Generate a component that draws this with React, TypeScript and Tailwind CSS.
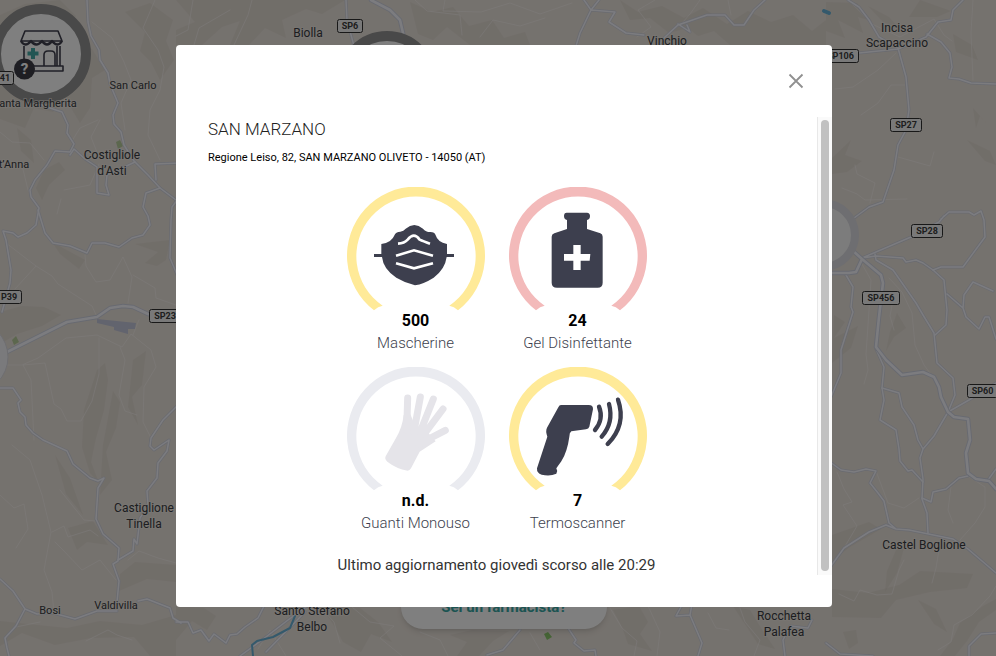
import * as React from "react"

const roads = [
  "M87 0L88 22L91 36L99 50L100 60L108 73L110 84L118 103L113 115L114 124L121 132L124 145L134 161L148 175L160 188L180 203",
  "M30 100L44 106L62 112L68 125L67 133L74 144L70 152L55 151L47 165L35 180L30 190L31 197L39 208L36 225L27 233L18 237L13 233L3 231L6 240L11 270L10 283L2 312",
  "M38 210L45 233L53 243L70 246L87 253L92 243L105 243L119 247L132 238L143 235L150 225L148 216L143 207L146 193L160 188",
  "M70 155L74 149L85 159L97 167L97 193L109 195L106 185L107 175L135 162",
  "M180 163L155 164L156 180M178 199L172 207L171 220L170 258L178 277",
  "M0 388L13 388L21 400L18 403L20 412L25 417L26 425L33 433L43 440L67 451L73 464L90 478L98 481L104 478L98 488L96 519L103 534L119 548L118 561L113 564L119 581L117 602",
  "M178 405L163 420L151 438L150 446L154 450L169 440L167 451L158 463L157 478L147 491L148 506L140 518L137 544L134 539L133 551L118 560",
  "M0 579L13 591L25 609L37 614L53 613L75 619L97 611L117 611M25 609L16 626L5 638L7 648L9 656M138 601L147 599L170 608L173 618L181 623",
  "M848 0L859 7L869 20L879 37L898 48L906 77L909 110L906 130L898 145L894 170L883 202L869 207L850 221",
  "M963 0L953 10L951 20L938 22L926 37L898 49L859 53M927 34L941 42L950 53L952 67L949 78L959 79L971 83L996 84",
  "M941 219L949 212L969 212L974 215L981 211L984 220L985 237L963 267L941 267L933 270L923 263L916 260L906 262L903 258L876 256L862 258L911 237L939 222L944 216",
  "M875 254L876 260L893 270L916 303L923 315L934 333L937 363L953 378L955 395L948 412",
  "M933 270L944 280L947 310L946 325L935 335M947 294L963 308L966 317L979 329L985 317L989 317L996 339M963 308L964 295L973 282L993 291",
  "M846 275L853 287L851 307L853 312L841 350L841 373L831 397",
  "M876 349L884 367L882 388L884 400L880 420L896 430L899 449L900 461L908 471L912 470L923 482",
  "M882 388L899 393L902 407L914 425L918 440L923 449M948 412L934 436L923 449L920 458L923 479L922 499L927 513L928 533M948 412L969 400L996 383",
  "M922 498L931 502L933 492L946 489L959 478L968 476M988 480L996 469",
  "M830 462L841 470L854 472L866 469L876 471L870 483L878 493L884 501L889 523L896 529M831 566L844 548L869 532L886 525L896 529L909 530L953 539L968 549L996 573",
  "M826 643L840 654L873 656M969 656L969 646L981 634L996 633",
  "M176 622L188 622L193 633L201 630L209 641L214 634L226 643L230 635L237 634L245 627L258 618L264 606",
  "M310 604L288 620L262 640L240 656M305 612L266 652M487 655L503 650L520 630M568 628L576 640L574 643L584 651L595 650L596 656",
  "M676 616L682 605L692 604L690 615L702 643L698 656M676 616L690 615M812 620L808 628L790 626L783 640L785 656",
  "M346 0L347 20L354 46M584 0L591 10L599 0M591 10L580 33L576 46M591 10L615 12L609 22L626 33L644 35",
  "M765 0L754 10L744 25L734 25L725 15L707 15L678 25L665 37L658 46M678 24L690 32L687 25",
]

const mainRoads = [
  "M0 356L7 352L67 322L97 317L110 308L123 306L133 307L148 314L180 322",
  "M371 0L390 10L400 20L403 33L404 46",
  "M830 273L849 273L856 272L862 259L881 275L883 283L879 317L876 347L886 360L902 375L923 372L934 377L939 387L941 397L948 412L954 417L968 419L970 440L966 453L968 473L976 479L989 481L996 489M862 259L852 250",
]

const lanes = [
  "M92 22L112 38L124 62L131 80L121 103L125 130M155 0L143 28L158 50L164 67L160 90L150 110L148 135L160 160",
  "M0 132L12 142L30 143L44 160M22 165L28 190L40 208M64 190L90 185L99 164M61 199L57 214M98 120L80 128L72 141M100 120L91 137L97 152",
  "M6 243L36 266L15 289M36 266L52 276L58 284L92 306L97 317M85 255L86 266L96 282L110 280L123 257L132 277L128 303",
  "M7 365L22 365L38 358L66 338L97 335L122 347L131 334L151 350L156 367L144 387L143 422L152 440M99 338L99 374L92 401L81 421L67 421L61 409L54 404L45 363L23 365L31 380L34 440",
  "M133 275L155 288L156 298L176 305M139 320L133 335M120 347L125 360L119 395L125 411L137 415",
  "M12 445L30 460L42 495L51 532L44 570L52 592L54 613M0 495L14 508L24 504L28 529L16 548M60 490L84 520L95 521M55 542L63 550L82 570L100 560L116 580",
  "M52 532L64 526L68 537L90 530L98 536M128 560L139 551L158 558L176 563M86 641L108 630L117 635L132 640M16 627L40 622",
  "M848 0L874 25L900 37L934 19L944 35L952 41M835 89L853 87L878 70L896 53M905 85L891 85L878 103L861 115",
  "M973 0L971 33L973 80M898 157L930 166L934 152M855 165L857 174L875 183L870 203M842 188L857 194L865 200L907 199",
  "M862 264L871 280L868 325L866 354L868 370L864 384M889 278L902 292L912 313L915 345L924 365L936 381M893 300L890 316L894 330",
  "M837 472L844 489L852 502L843 505L857 526L844 548M876 471L888 503L904 508L919 498M839 594L854 601L860 590L877 595L892 594L899 570L904 560",
  "M968 476L985 487L985 507L975 523L960 540M951 487L948 510L953 523M939 550L936 568L932 583M996 586L990 596L972 615L954 625L951 642L938 650",
  "M252 0L248 15L234 45M193 0L188 30L176 36M415 0L427 11L460 15L462 35M445 0L443 11L481 12L510 3L540 14L572 3",
  "M480 37L493 20L520 26L545 18M655 0L638 10L651 27L637 37M700 0L690 14L683 22M728 0L731 15M230 10L199 28L194 45",
  "M323 610L334 622L340 643M352 607L370 622L394 626L380 638L402 656M420 632L440 640L448 656M530 633L540 650M610 608L622 628L637 641L634 656",
  "M740 608L745 622L760 640L754 656M648 606L660 632L657 656M258 649L270 630L286 656M708 613L716 628L729 630",
]

const hills = [
  "M0 15L25 4L60 0L76 16L62 35L92 49L105 70L92 78L90 108L80 123L65 98L53 112L34 108L25 128L0 119Z",
  "M125 12L150 3L173 20L166 41L174 60L160 80L151 62L140 51L145 32Z",
  "M0 312L22 306L44 307L61 315L42 326L17 334L0 344ZM52 242L85 260L79 269L60 254ZM135 244L170 240L166 260L157 266L145 263L158 252Z",
  "M17 128L31 140L34 163L21 151ZM44 170L59 162L65 170L49 185L42 200L36 188Z",
  "M97 370L105 363L108 380L104 410L96 438L91 462L99 483L90 473L82 447L84 410Z",
  "M113 391L120 402L116 428L106 452L112 480L100 495L103 445Z",
  "M133 360L146 351L142 385L132 397L138 425L128 407Z",
  "M0 621L37 625L67 628L100 621L142 625L176 615V656H150L134 637L91 638L55 645L22 633L0 646Z",
  "M120 574L135 562L176 565V582L147 579L119 591Z",
  "M68 528L93 521L108 545L87 542L77 550ZM55 455L70 478L83 515L66 494Z",
  "M176 0H345L322 14L306 9L282 20L286 38L265 28L249 45H230L240 21L222 27L202 45H176V30L195 22Z",
  "M410 2L432 12L453 7L469 26L492 20L504 38L525 32L530 45H470L447 27L433 40L418 34Z",
  "M620 0L638 12L662 6L684 18L703 8L727 24L748 11L771 22L793 15L812 31L826 20V45H730L714 31L698 36L688 28L669 33L650 18L630 20Z",
  "M826 2L857 3L872 21L858 17L863 33L838 20L845 38L826 31ZM920 0L951 11L937 17L909 17Z",
  "M832 158L851 140L845 155L862 161L847 172L832 174ZM973 108L988 125L980 116L976 128ZM967 140L990 151L996 165L985 161Z",
  "M868 6L889 17L900 29L883 22ZM953 34L972 45L978 60L956 52Z",
  "M834 315L845 322L834 338L858 326L851 348L832 363ZM897 313L906 328L894 337L886 351L890 332Z",
  "M832 535L869 522L881 529L850 547L832 561ZM832 589L868 593L899 585L920 571L973 574L967 588L930 592L896 600L881 618L832 617Z",
  "M953 639L960 623L983 606L996 599V610L979 622L967 641L955 656H940Z",
  "M887 571L896 550L904 548L897 573L885 592ZM918 600L936 609L947 632L934 624ZM843 632L856 630L858 643L849 649Z",
  "M176 606L204 608L216 616L207 630L192 621L176 640ZM320 606L360 608L378 622L392 642L371 634L361 652L343 642L333 624Z",
  "M450 635L472 630L509 631L493 641L479 656H457L467 642ZM613 610L639 606L648 622L640 634L652 651L628 644L622 627ZM733 606L750 610L761 628L775 649L758 644Z",
]

const labels = [
  { x: 308, y: 37, text: "Biolla", size: 12 },
  { x: 667, y: 45, text: "Vinchio", size: 12 },
  { x: 897, y: 32, text: "Incisa", size: 12 },
  { x: 897, y: 47, text: "Scapaccino", size: 12 },
  { x: 133, y: 89, text: "San Carlo", size: 11 },
  { x: 38, y: 107, text: "anta Margherita", size: 11 },
  { x: 112, y: 159, text: "Costigliole", size: 12 },
  { x: 112, y: 175, text: "d’Asti", size: 12 },
  { x: 14, y: 168, text: "t’Anna", size: 11 },
  { x: 144, y: 512, text: "Castiglione", size: 12 },
  { x: 144, y: 528, text: "Tinella", size: 12 },
  { x: 924, y: 549, text: "Castel Boglione", size: 12 },
  { x: 50, y: 614, text: "Bosi", size: 11 },
  { x: 116, y: 609, text: "Valdivilla", size: 11 },
  { x: 312, y: 615, text: "Santo Stefano", size: 12 },
  { x: 312, y: 631, text: "Belbo", size: 12 },
  { x: 784, y: 620, text: "Rocchetta", size: 12 },
  { x: 784, y: 636, text: "Palafea", size: 12 },
]

const shields = [
  { x: 337, y: 19, w: 26, text: "SP6" },
  { x: 822, y: 49, w: 37, text: "SP106" },
  { x: 890, y: 118, w: 32, text: "SP27" },
  { x: 911, y: 224, w: 32, text: "SP28" },
  { x: 862, y: 291, w: 38, text: "SP456" },
  { x: 967, y: 384, w: 31, text: "SP60" },
  { x: 149, y: 309, w: 32, text: "SP23" },
  { x: -4, y: 290, w: 26, text: "P39" },
  { x: -4, y: 71, w: 18, text: "41" },
]

const StoreMarker = () => (
  <g>
    <circle cx="41" cy="54" r="45" fill="#fff" stroke="#929292" strokeWidth="10" />
    <g fill="none" stroke="#40404f" strokeWidth="1.6" strokeLinejoin="round">
      <path d="M25 31H58L62 41H21Z" />
      <path d="M21 41Q25 48 31 41Q36 48 42 41Q47 48 52 41Q58 48 62 41" strokeWidth="2.4" />
      <path d="M24 46V66M60 46V66M57 46V66M21 66H63V71H21ZM44 66V55Q44 51 48 51H51Q55 51 55 55V66" />
    </g>
    <path d="M31 48h4v3.500h3.500v4H35V59h-4v-3.500h-3.500v-4H31z" fill="#44aaa6" />
    <circle cx="24.500" cy="69" r="10.500" fill="#3c3c46" />
    <text x="24.500" y="74" textAnchor="middle" fontSize="15" fontWeight="800" fill="#fff">?</text>
  </g>
)

const MapBackground = () => (
  <svg
    className="absolute inset-0 h-full w-full font-['Roboto',sans-serif]"
    viewBox="0 0 996 656"
    preserveAspectRatio="xMidYMid slice"
    aria-hidden="true"
  >
    <rect width="996" height="656" fill="#ebe4dc" />
    {hills.map((d) => (
      <path key={d} d={d} fill="#cfcbbf" opacity="0.3" />
    ))}
    <path d="M97 319L136 323L135 329H128V334L114 330V327L97 323Z" fill="#c4c8dc" />
    <g fill="#b9cf9c">
      <path d="M116 142l4-2 3 6-5 3zM12 340l4-4 3 6-5 3z" />
      <path d="M544 634l4-2 4 5-5 3z" fill="#8cc96c" />
    </g>
    <g fill="none" strokeLinejoin="round" strokeLinecap="round">
      {lanes.map((d) => (
        <path key={d} d={d} stroke="#fbf8f6" strokeOpacity="0.55" strokeWidth="1" />
      ))}
      {roads.map((d) => (
        <path key={d} d={d} stroke="#d2d5e0" strokeWidth="3" />
      ))}
      {roads.map((d) => (
        <path key={d} d={d} stroke="#f8f8ff" strokeWidth="1.5" />
      ))}
      {mainRoads.map((d) => (
        <path key={d} d={d} stroke="#d0d4e2" strokeWidth="4.500" />
      ))}
      {mainRoads.map((d) => (
        <path key={d} d={d} stroke="#f8f8ff" strokeWidth="2.600" />
      ))}
      <path d="M295 616L290 628L273 637L257 641L252 645L253 656" stroke="#68b3d8" strokeWidth="2" />
      <path d="M824 11L829 13" stroke="#68b3d8" strokeWidth="4" />
    </g>
    <circle cx="387" cy="81" r="45" fill="#fff" stroke="#929292" strokeWidth="10" />
    <circle cx="823" cy="235" r="32" fill="#f8f8f8" stroke="#dcdce2" strokeWidth="8" />
    <circle cx="-28" cy="357" r="36" fill="#f4f4f8" stroke="#dcdce2" strokeWidth="1" />
    <StoreMarker />
    {shields.map((s) => (
      <g key={s.text}>
        <rect x={s.x + 0.5} y={s.y + 0.5} width={s.w - 1} height="13" rx="2" fill="#f2f2f2" stroke="#303030" />
        <text x={s.x + s.w / 2} y={s.y + 10} textAnchor="middle" fontSize="9" fontWeight="700" fill="#3c3c3c">
          {s.text}
        </text>
      </g>
    ))}
    {labels.map((l) => (
      <text
        key={l.text}
        x={l.x}
        y={l.y}
        textAnchor="middle"
        fontSize={l.size}
        fill="#3a3c42"
        stroke="#f4efe9"
        strokeWidth="2"
        strokeOpacity="0.6"
        paintOrder="stroke"
      >
        {l.text}
      </text>
    ))}
  </svg>
)

const MaskIcon = () => (
  <g transform="translate(-12 -21)">
    <path
      d="M115 192Q145 190 156 163Q160 155 172 155Q182 153 188 146Q214 124 240 146Q248 156 262 156Q275 156 278 166Q284 187 312 192V226H333V231H311Q306 268 272 293Q242 312 216 316Q185 308 160 293Q121 268 117 231H93V222H115Z"
      fill="#3d3f4e"
    />
    <path
      d="M165 191Q184 190 194 179Q213 155 230 179Q240 184 261 191M159 227L213 211L270 227M159 250L213 265L270 250"
      fill="none"
      stroke="#fff"
      strokeWidth="8"
    />
    <path d="M93 222H117V231H93ZM310 222H333V231H310Z" fill="#3d3f4e" />
  </g>
)

const BottleIcon = () => (
  <g transform="translate(-24 -21)">
    <path
      d="M197 98H258Q267 99 267 108Q267 118 258 120V147L298 160Q305 163 305 170V308Q305 323 290 323H168Q152 323 152 308V170Q152 162 160 160L198 147V120Q189 118 189 108Q189 98 197 98Z"
      fill="#3d3f4e"
    />
    <path d="M217 195h22v27h29l-2 20h-27v28h-22v-28h-28v-20h28z" fill="#fff" />
  </g>
)

const GloveIcon = () => (
  <g transform="translate(-24 -21)" fill="#e5e4e9" stroke="#e5e4e9">
    <path
      d="M194 165Q190 202 171 234L140 289Q136 298 145 305Q172 326 206 332Q212 332 216 325L242 275L290 244L262 212L245 205L225 190L213 160Z"
      stroke="none"
    />
    <path
      d="M206 114L203 210M244 111L225 215M283 117L243 217M312 147L256 222M319 211L240 252"
      strokeWidth="21"
      strokeLinecap="round"
    />
  </g>
)

const ScannerIcon = () => (
  <g transform="translate(-27 -21)">
    <path
      d="M183 135H266Q280 135 279 148L268 200Q266 207 258 208L214 214Q208 218 208 230Q202 275 184 304L169 325Q174 333 169 341Q150 350 125 344Q110 340 111 325L142 230Q136 212 141 203L175 142Q178 135 183 135Z"
      fill="#3d3f4e"
    />
    <path
      d="M297 140Q312 178 285 210M327 132Q342 188 305 230M354 119Q380 194 323 252"
      fill="none"
      stroke="#3d3f4e"
      strokeWidth="13"
      strokeLinecap="round"
    />
  </g>
)

const products = [
  { name: "Mascherine", amount: "500", ring: "#ffea98", icon: <MaskIcon /> },
  { name: "Gel Disinfettante", amount: "24", ring: "#f3baba", icon: <BottleIcon /> },
  { name: "Guanti Monouso", amount: "n.d.", ring: "#eaebf0", icon: <GloveIcon /> },
  { name: "Termoscanner", amount: "7", ring: "#ffea98", icon: <ScannerIcon /> },
]

const App = () => {
  const [isOpen, setIsOpen] = React.useState(true)

  return (
    <main className="relative min-h-screen overflow-hidden font-['Roboto',sans-serif]">
      <MapBackground />

      <div className="absolute inset-x-0 bottom-[27px] flex justify-center pl-3">
        <button className="h-11 rounded-full bg-white px-10 text-[15px] font-bold text-[#38a8a4] shadow-md">
          Sei un farmacista?
        </button>
      </div>

      {isOpen && (
        <div className="relative flex min-h-screen items-center justify-center bg-black/50 pb-1 pl-3">
          <section role="dialog" aria-labelledby="store-name" className="w-full max-w-[656px] rounded bg-white pb-8">
            <div className="flex h-[72px] items-center justify-end pr-7">
              <button onClick={() => setIsOpen(false)} aria-label="Chiudi" className="text-[#909090]">
                <svg className="h-4 w-4" viewBox="0 0 16 16" fill="none" stroke="currentColor" strokeWidth="1.8">
                  <path d="M1.500 1.500L14.500 14.500M14.500 1.500L1.500 14.500" />
                </svg>
              </button>
            </div>

            <div className="flex">
              <div className="flex-1 px-8">
                <h1 id="store-name" className="text-[17px] leading-6 font-light text-[#222]">SAN MARZANO</h1>
                <p className="mt-2 text-[11px] leading-[18px] text-black">
                  Regione Leiso, 82, SAN MARZANO OLIVETO - 14050 (AT)
                </p>

                <ul className="mt-5 grid grid-cols-[138px_138px] justify-center gap-x-6 gap-y-3">
                  {products.map((item) => (
                    <li key={item.name} className="flex flex-col items-center">
                      <svg className="h-[124px] w-[138px]" viewBox="0 0 414 372" aria-hidden="true">
                        <path
                          d="M81 370A207 207 0 1 1 333 370Q321 358 307 356A179 179 0 1 0 107 356Q93 358 81 370Z"
                          fill={item.ring}
                        />
                        {item.icon}
                      </svg>
                      <strong className="text-base leading-5 font-bold text-black">{item.amount}</strong>
                      <span className="text-[15px] leading-6 whitespace-nowrap font-light text-[#3d3f4e]">{item.name}</span>
                    </li>
                  ))}
                </ul>

                <p className="mt-5 text-center text-[15px] leading-5 text-[#333]">
                  Ultimo aggiornamento giovedì scorso alle 20:29
                </p>
              </div>

              <div className="flex w-[15px] justify-center border-l border-[#e8e8e8] bg-[#fafafa] pt-[3px] pb-1">
                <div className="w-2 rounded-full bg-[#c1c1c1]" />
              </div>
            </div>
          </section>
        </div>
      )}
    </main>
  )
}

export default App
